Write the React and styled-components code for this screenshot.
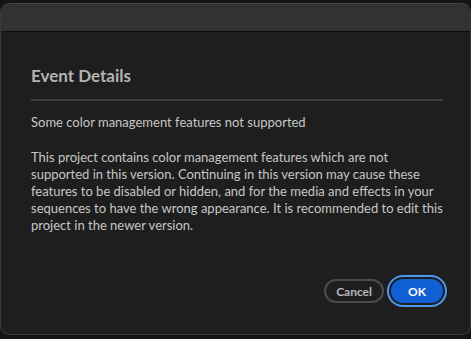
import React from 'react';
import styled, { createGlobalStyle } from 'styled-components';

const Global = createGlobalStyle`
	html, body {
		margin: 0;
		padding: 0;
		background: #141414;
		width: 471px;
		height: 339px;
		overflow: hidden;
	}
	* {
		box-sizing: border-box;
	}
`;

const Window = styled.div`
	margin-top: 3px;
	width: 471px;
	height: 332px;
	background: #1e1e1e;
	border-radius: 9px;
	border: 1px solid #3a3a3a;
	border-top-color: #454545;
	overflow: hidden;
	display: flex;
	flex-direction: column;
	font-family: 'Lato', 'Open Sans', sans-serif;
`;

const TitleBar = styled.div`
	height: 28px;
	flex: none;
	background: #323232;
	border-bottom: 1px solid #0c0c0c;
`;

const Body = styled.div`
	flex: 1;
	display: flex;
	flex-direction: column;
	padding: 33px 27px 0 30px;
`;

const Heading = styled.h2`
	margin: 0;
	font-size: 17px;
	font-weight: 700;
	color: #b3b3b3;
	line-height: 22px;
	padding-bottom: 12px;
	border-bottom: 2px solid #3b3b3b;
`;

const Text = styled.p`
	margin: ${(p) => p.$top}px 0 0;
	font-size: 13px;
	line-height: 17px;
	color: #c6c6c6;
`;

const Actions = styled.div`
	margin-top: auto;
	margin-bottom: 31px;
	display: flex;
	justify-content: flex-end;
	align-items: center;
	gap: 7px;
`;

const Button = styled.button`
	font-family: 'Lato', 'Open Sans', sans-serif;
	font-weight: 700;
	font-size: 12px;
	height: 24px;
	border-radius: 12px;
	padding: 0 10px;
	cursor: pointer;
	${(p) =>
		p.$primary
			? `
		background: #1060d4;
		color: #ffffff;
		border: none;
		min-width: 52px;
		outline: 2px solid #4a9af2;
		outline-offset: 2px;
	`
			: `
		background: transparent;
		color: #b8b8b8;
		border: 2px solid #4b4b4b;
		min-width: 58px;
	`}
`;

export default function App() {
	return (
		<>
			<Global />
			<Window>
				<TitleBar />
				<Body>
					<Heading>Event Details</Heading>
					<Text $top={13}>Some color management features not supported</Text>
					<Text $top={18}>
						This project contains color management features which are not
						supported in this version. Continuing in this version may cause these
						features to be disabled or hidden, and for the media and effects in your
						sequences to have the wrong appearance. It is recommended to edit this
						project in the newer version.
					</Text>
					<Actions>
						<Button>Cancel</Button>
						<Button $primary>OK</Button>
					</Actions>
				</Body>
			</Window>
		</>
	);
}
